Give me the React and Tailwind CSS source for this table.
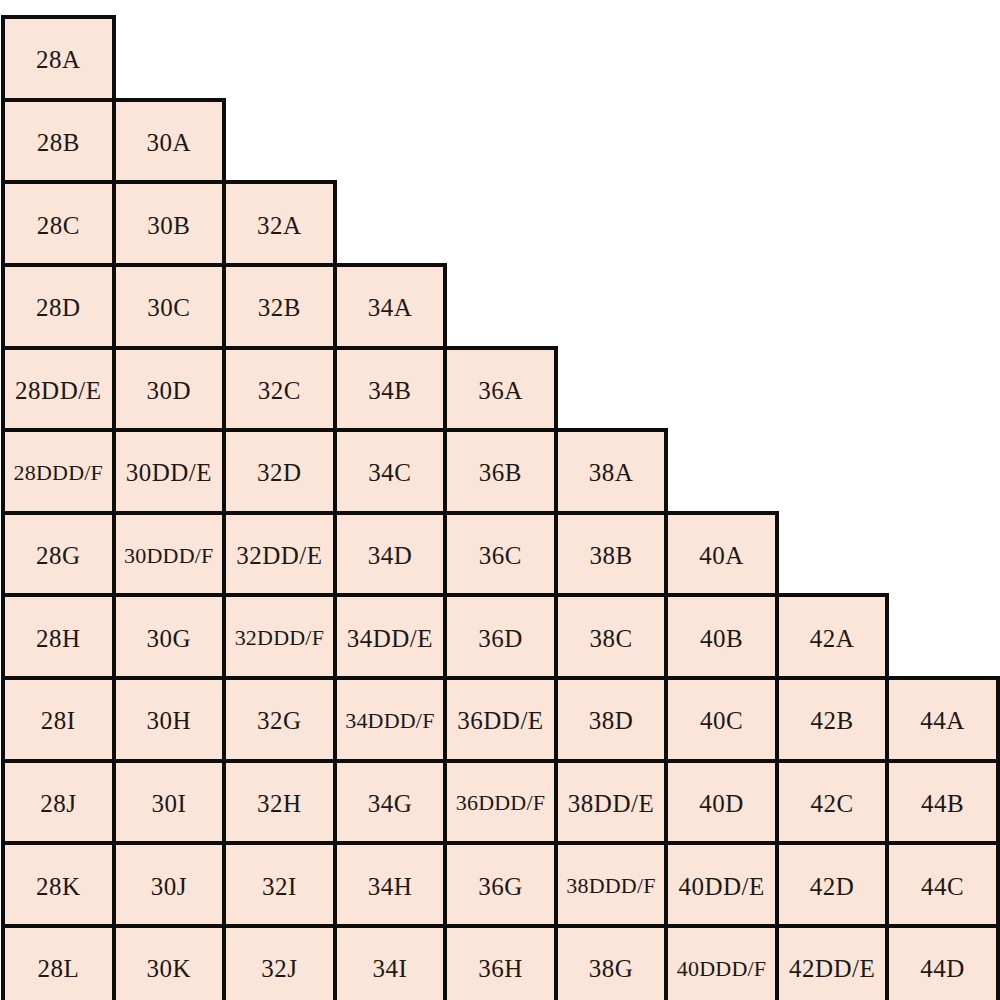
const bands = [28, 30, 32, 34, 36, 38, 40, 42, 44];
const cups = ["A", "B", "C", "D", "DD/E", "DDD/F", "G", "H", "I", "J", "K", "L"];

export default function App() {
  const cells = [];
  for (let r = 0; r < cups.length; r++) {
    for (let c = 0; c < bands.length; c++) {
      if (c > r) {
        cells.push(<div key={`${r}-${c}`} />);
        continue;
      }
      const cup = cups[r - c];
      cells.push(<SizeCell key={`${r}-${c}`} label={`${bands[c]}${cup}`} small={cup === "DDD/F"} />);
    }
  }

  return (
    <div className="w-[1000px] h-[1000px] overflow-hidden bg-white pt-[15px] pl-[1px]">
      <div className="grid grid-cols-[repeat(9,110.56px)] auto-rows-[82.64px]">
        {cells}
      </div>
    </div>
  );
}

function SizeCell({ label, small }) {
  return (
    <div className="-mr-[4px] -mb-[4px] border-[4px] border-[#0d0d0d] bg-[#fbe4d8] flex items-center justify-center pt-[3px]">
      <span
        className={`font-[family-name:'Liberation_Serif',serif] text-[#1c1815] leading-none whitespace-nowrap ${
          small ? "text-[22px] tracking-[0.2px]" : "text-[25px] tracking-[0.5px]"
        }`}
      >
        {label}
      </span>
    </div>
  );
}
